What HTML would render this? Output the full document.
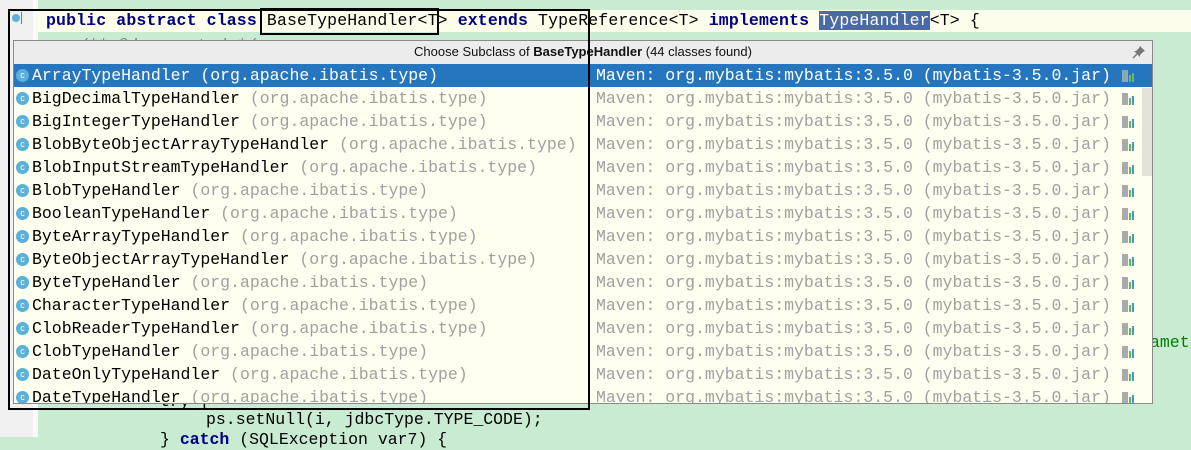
<!DOCTYPE html><html><head><style>
body{margin:0;width:1191px;height:437px;overflow:hidden;background:#c9ebd1;position:relative;font-family:"Liberation Mono",monospace;}
.gut{position:absolute;left:0;top:0;width:33px;height:437px;background:#f0f0f0}
.gut2{position:absolute;left:33px;top:0;width:5px;height:437px;background:#fafafa}
.l1{position:absolute;left:38px;top:10px;width:1153px;height:22px;background:#fdfdeb}
.code{position:absolute;font-size:16.5px;white-space:pre;color:#000;line-height:20px}
.kw{color:#000080;font-weight:bold}
.pop{position:absolute;left:13px;top:40px;width:1138px;height:362px;border:1px solid #8a8a8a;background:#fffff0;overflow:hidden}
.hdr{height:23px;background:#ececec;font-family:"Liberation Sans",sans-serif;font-size:13px;text-align:center;line-height:22px;color:#111;position:relative}
.row{height:23px;position:relative;font-size:16.5px;line-height:23px;white-space:pre;color:#000}
.row .p{color:#a0a0a0}
.row .m{position:absolute;left:582px;top:0;color:#a0a0a0}
.row.sel{background:#2675bf;color:#fff}
.row.sel .p,.row.sel .m{color:#fff}
.ic{position:absolute;left:2px;top:5px;width:13px;height:13px;border-radius:50%;background:#5ab0d8;color:#fff;font-size:9px;line-height:13px;text-align:center;font-family:"Liberation Sans",sans-serif}
.t{position:absolute;left:18px;top:0}
.jar{position:absolute;left:1108px;top:6px;width:14px;height:12px}
.sb{position:absolute;left:1128px;top:47px;width:10px;height:88px;background:#e2e2d8}
</style></head><body>
<div class="gut"></div><div class="gut2"></div>
<div class="l1"></div>
<div style="position:absolute;left:12px;top:14px;width:8px;height:8px;border-radius:50%;background:#5ab0d8"></div>
<div style="position:absolute;left:21px;top:12px;width:1px;height:12px;background:#777"></div>
<div class="code" style="left:38px;top:36px;color:#808080;font-style:italic">    /** @deprecated */</div>
<div class="code" style="left:46px;top:11px;letter-spacing:0.14px"><span class="kw">public abstract class</span> BaseTypeHandler&lt;T&gt; <span class="kw">extends</span> TypeReference&lt;T&gt; <span class="kw">implements</span> <span style="background:#4a6aa5;color:#fff">TypeHandler</span>&lt;T&gt; {</div>
<div class="code" style="left:1150px;top:333px;color:#008000">amet</div>
<div class="code" style="left:160px;top:392px">try {</div>
<div class="code" style="left:206px;top:410px">ps.setNull(i, jdbcType.TYPE_CODE);</div>
<div class="code" style="left:160px;top:430px">} <span class="kw">catch</span> (SQLException var7) {</div>
<div class="pop">
<div class="hdr">Choose Subclass of <b>BaseTypeHandler</b> (44 classes found)<svg style="position:absolute;right:6px;top:4px" width="14" height="14" viewBox="0 0 14 14"><path d="M8 1 L13 6 L11 7 L8 10 L8 12 L2 6 L4 6 L7 3 Z" fill="#777"/><path d="M5 9 L1 13" stroke="#777" stroke-width="1.5"/></svg></div>
<div class="row sel"><span class="ic">c</span><span class="t">ArrayTypeHandler <span class="p">(org.apache.ibatis.type)</span></span><span class="m">Maven: org.mybatis:mybatis:3.5.0 (mybatis-3.5.0.jar)</span><svg class="jar" viewBox="0 0 14 12"><rect x="0" y="0" width="6" height="12" fill="#8aa"/><rect x="7" y="5" width="2" height="7" fill="#6b6"/><rect x="10" y="3" width="2" height="9" fill="#6b6"/></svg></div>
<div class="row"><span class="ic">c</span><span class="t">BigDecimalTypeHandler <span class="p">(org.apache.ibatis.type)</span></span><span class="m">Maven: org.mybatis:mybatis:3.5.0 (mybatis-3.5.0.jar)</span><svg class="jar" viewBox="0 0 14 12"><rect x="0" y="0" width="6" height="12" fill="#aaa"/><rect x="7" y="5" width="2" height="7" fill="#6b4"/><rect x="10" y="3" width="2" height="9" fill="#49c"/></svg></div>
<div class="row"><span class="ic">c</span><span class="t">BigIntegerTypeHandler <span class="p">(org.apache.ibatis.type)</span></span><span class="m">Maven: org.mybatis:mybatis:3.5.0 (mybatis-3.5.0.jar)</span><svg class="jar" viewBox="0 0 14 12"><rect x="0" y="0" width="6" height="12" fill="#aaa"/><rect x="7" y="5" width="2" height="7" fill="#6b4"/><rect x="10" y="3" width="2" height="9" fill="#49c"/></svg></div>
<div class="row"><span class="ic">c</span><span class="t">BlobByteObjectArrayTypeHandler <span class="p">(org.apache.ibatis.type)</span></span><span class="m">Maven: org.mybatis:mybatis:3.5.0 (mybatis-3.5.0.jar)</span><svg class="jar" viewBox="0 0 14 12"><rect x="0" y="0" width="6" height="12" fill="#aaa"/><rect x="7" y="5" width="2" height="7" fill="#6b4"/><rect x="10" y="3" width="2" height="9" fill="#49c"/></svg></div>
<div class="row"><span class="ic">c</span><span class="t">BlobInputStreamTypeHandler <span class="p">(org.apache.ibatis.type)</span></span><span class="m">Maven: org.mybatis:mybatis:3.5.0 (mybatis-3.5.0.jar)</span><svg class="jar" viewBox="0 0 14 12"><rect x="0" y="0" width="6" height="12" fill="#aaa"/><rect x="7" y="5" width="2" height="7" fill="#6b4"/><rect x="10" y="3" width="2" height="9" fill="#49c"/></svg></div>
<div class="row"><span class="ic">c</span><span class="t">BlobTypeHandler <span class="p">(org.apache.ibatis.type)</span></span><span class="m">Maven: org.mybatis:mybatis:3.5.0 (mybatis-3.5.0.jar)</span><svg class="jar" viewBox="0 0 14 12"><rect x="0" y="0" width="6" height="12" fill="#aaa"/><rect x="7" y="5" width="2" height="7" fill="#6b4"/><rect x="10" y="3" width="2" height="9" fill="#49c"/></svg></div>
<div class="row"><span class="ic">c</span><span class="t">BooleanTypeHandler <span class="p">(org.apache.ibatis.type)</span></span><span class="m">Maven: org.mybatis:mybatis:3.5.0 (mybatis-3.5.0.jar)</span><svg class="jar" viewBox="0 0 14 12"><rect x="0" y="0" width="6" height="12" fill="#aaa"/><rect x="7" y="5" width="2" height="7" fill="#6b4"/><rect x="10" y="3" width="2" height="9" fill="#49c"/></svg></div>
<div class="row"><span class="ic">c</span><span class="t">ByteArrayTypeHandler <span class="p">(org.apache.ibatis.type)</span></span><span class="m">Maven: org.mybatis:mybatis:3.5.0 (mybatis-3.5.0.jar)</span><svg class="jar" viewBox="0 0 14 12"><rect x="0" y="0" width="6" height="12" fill="#aaa"/><rect x="7" y="5" width="2" height="7" fill="#6b4"/><rect x="10" y="3" width="2" height="9" fill="#49c"/></svg></div>
<div class="row"><span class="ic">c</span><span class="t">ByteObjectArrayTypeHandler <span class="p">(org.apache.ibatis.type)</span></span><span class="m">Maven: org.mybatis:mybatis:3.5.0 (mybatis-3.5.0.jar)</span><svg class="jar" viewBox="0 0 14 12"><rect x="0" y="0" width="6" height="12" fill="#aaa"/><rect x="7" y="5" width="2" height="7" fill="#6b4"/><rect x="10" y="3" width="2" height="9" fill="#49c"/></svg></div>
<div class="row"><span class="ic">c</span><span class="t">ByteTypeHandler <span class="p">(org.apache.ibatis.type)</span></span><span class="m">Maven: org.mybatis:mybatis:3.5.0 (mybatis-3.5.0.jar)</span><svg class="jar" viewBox="0 0 14 12"><rect x="0" y="0" width="6" height="12" fill="#aaa"/><rect x="7" y="5" width="2" height="7" fill="#6b4"/><rect x="10" y="3" width="2" height="9" fill="#49c"/></svg></div>
<div class="row"><span class="ic">c</span><span class="t">CharacterTypeHandler <span class="p">(org.apache.ibatis.type)</span></span><span class="m">Maven: org.mybatis:mybatis:3.5.0 (mybatis-3.5.0.jar)</span><svg class="jar" viewBox="0 0 14 12"><rect x="0" y="0" width="6" height="12" fill="#aaa"/><rect x="7" y="5" width="2" height="7" fill="#6b4"/><rect x="10" y="3" width="2" height="9" fill="#49c"/></svg></div>
<div class="row"><span class="ic">c</span><span class="t">ClobReaderTypeHandler <span class="p">(org.apache.ibatis.type)</span></span><span class="m">Maven: org.mybatis:mybatis:3.5.0 (mybatis-3.5.0.jar)</span><svg class="jar" viewBox="0 0 14 12"><rect x="0" y="0" width="6" height="12" fill="#aaa"/><rect x="7" y="5" width="2" height="7" fill="#6b4"/><rect x="10" y="3" width="2" height="9" fill="#49c"/></svg></div>
<div class="row"><span class="ic">c</span><span class="t">ClobTypeHandler <span class="p">(org.apache.ibatis.type)</span></span><span class="m">Maven: org.mybatis:mybatis:3.5.0 (mybatis-3.5.0.jar)</span><svg class="jar" viewBox="0 0 14 12"><rect x="0" y="0" width="6" height="12" fill="#aaa"/><rect x="7" y="5" width="2" height="7" fill="#6b4"/><rect x="10" y="3" width="2" height="9" fill="#49c"/></svg></div>
<div class="row"><span class="ic">c</span><span class="t">DateOnlyTypeHandler <span class="p">(org.apache.ibatis.type)</span></span><span class="m">Maven: org.mybatis:mybatis:3.5.0 (mybatis-3.5.0.jar)</span><svg class="jar" viewBox="0 0 14 12"><rect x="0" y="0" width="6" height="12" fill="#aaa"/><rect x="7" y="5" width="2" height="7" fill="#6b4"/><rect x="10" y="3" width="2" height="9" fill="#49c"/></svg></div>
<div class="row"><span class="ic">c</span><span class="t">DateTypeHandler <span class="p">(org.apache.ibatis.type)</span></span><span class="m">Maven: org.mybatis:mybatis:3.5.0 (mybatis-3.5.0.jar)</span><svg class="jar" viewBox="0 0 14 12"><rect x="0" y="0" width="6" height="12" fill="#aaa"/><rect x="7" y="5" width="2" height="7" fill="#6b4"/><rect x="10" y="3" width="2" height="9" fill="#49c"/></svg></div>
<div class="sb"></div>
</div>
<div style="position:absolute;left:8px;top:9px;width:578px;height:397px;border:2px solid #000"></div>
<div style="position:absolute;left:260px;top:8px;width:175px;height:23px;border:2px solid #000"></div>
</body></html>
